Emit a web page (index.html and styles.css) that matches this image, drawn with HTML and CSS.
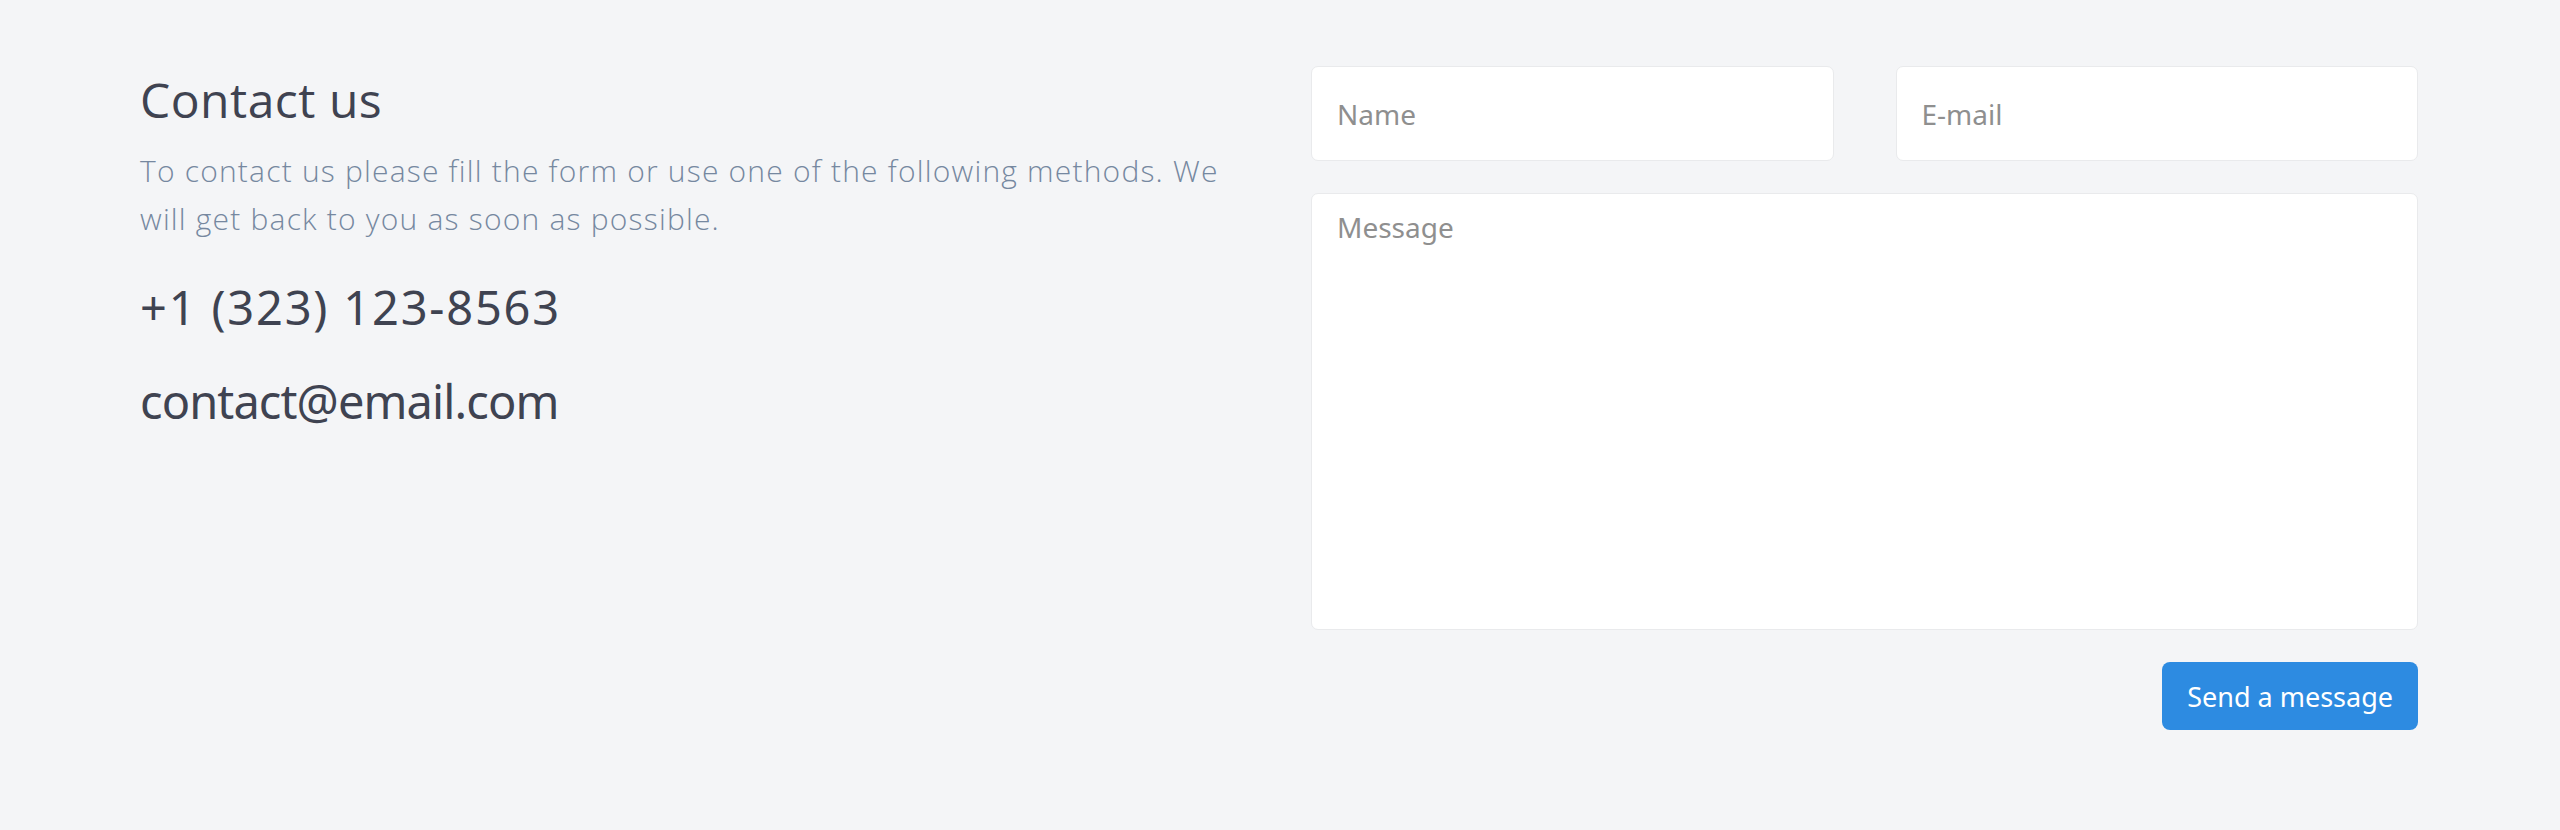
FILE: index.html
```html
<!DOCTYPE html>
<html lang="en">
<head>
<meta charset="utf-8">
<title>Contact us</title>
<link rel="stylesheet" href="styles.css">
</head>
<body>
<section class="contact">
  <div class="info">
    <h1 class="title">Contact us</h1>
    <p class="lead">To contact us please fill the form or use one of the following methods. We will get back to you as soon as possible.</p>
    <p class="method phone">+1 (323) 123-8563</p>
    <p class="method mail">contact@email.com</p>
  </div>
  <form class="form">
    <div class="row">
      <input class="field" type="text" placeholder="Name">
      <input class="field" type="email" placeholder="E-mail">
    </div>
    <textarea class="field area" placeholder="Message"></textarea>
    <div class="actions">
      <button class="btn" type="button">Send a message</button>
    </div>
  </form>
</section>
</body>
</html>
```

FILE: styles.css
```css
html, body {
  margin: 0;
  padding: 0;
  background: #f4f5f7;
}
body {
  font-family: "Open Sans", "Liberation Sans", sans-serif;
}
.contact {
  display: grid;
  grid-template-columns: 1fr 1fr;
  column-gap: 64px;
  width: 2278px;
  padding: 66px 0 0 140px;
  box-sizing: content-box;
}
.info {
  display: flex;
  flex-direction: column;
}
.title {
  margin: 5px 0 0 0;
  font-family: "Open Sans", sans-serif;
  font-weight: 500;
  font-size: 48px;
  line-height: 58px;
  letter-spacing: 0.5px;
  color: #3f4351;
}
.lead {
  margin: 18px 0 0 0;
  font-family: "Open Sans", sans-serif;
  font-weight: 300;
  font-size: 30px;
  line-height: 48px;
  letter-spacing: 1.2px;
  color: #7688a0;
}
.method {
  margin: 31px 0 0 0;
  font-family: "Noto Sans", sans-serif;
  font-size: 47px;
  line-height: 66px;
  color: #3f4351;
}
.phone {
  letter-spacing: 1.8px;
}
.mail {
  margin-top: 28px;
  letter-spacing: -0.9px;
}
.form {
  display: flex;
  flex-direction: column;
  gap: 32px;
  margin: 0;
}
.row {
  display: grid;
  grid-template-columns: 1fr 1fr;
  column-gap: 62px;
}
.field {
  box-sizing: border-box;
  height: 95px;
  padding: 0 25px;
  border: 1px solid #e9eaec;
  border-radius: 7px;
  background: #fff;
  font-family: "Noto Sans", sans-serif;
  font-size: 28px;
  color: #3f4351;
  outline: none;
}
.field::placeholder {
  color: #8f8f8f;
}
.area {
  height: 437px;
  padding: 12px 25px;
  resize: none;
  line-height: 42px;
}
.actions {
  display: flex;
  justify-content: flex-end;
}
.btn {
  height: 68px;
  padding: 0 25px;
  border: none;
  border-radius: 8px;
  background: #2d8be1;
  color: #fff;
  font-family: "Noto Sans", sans-serif;
  font-size: 27px;
  cursor: pointer;
}
```
